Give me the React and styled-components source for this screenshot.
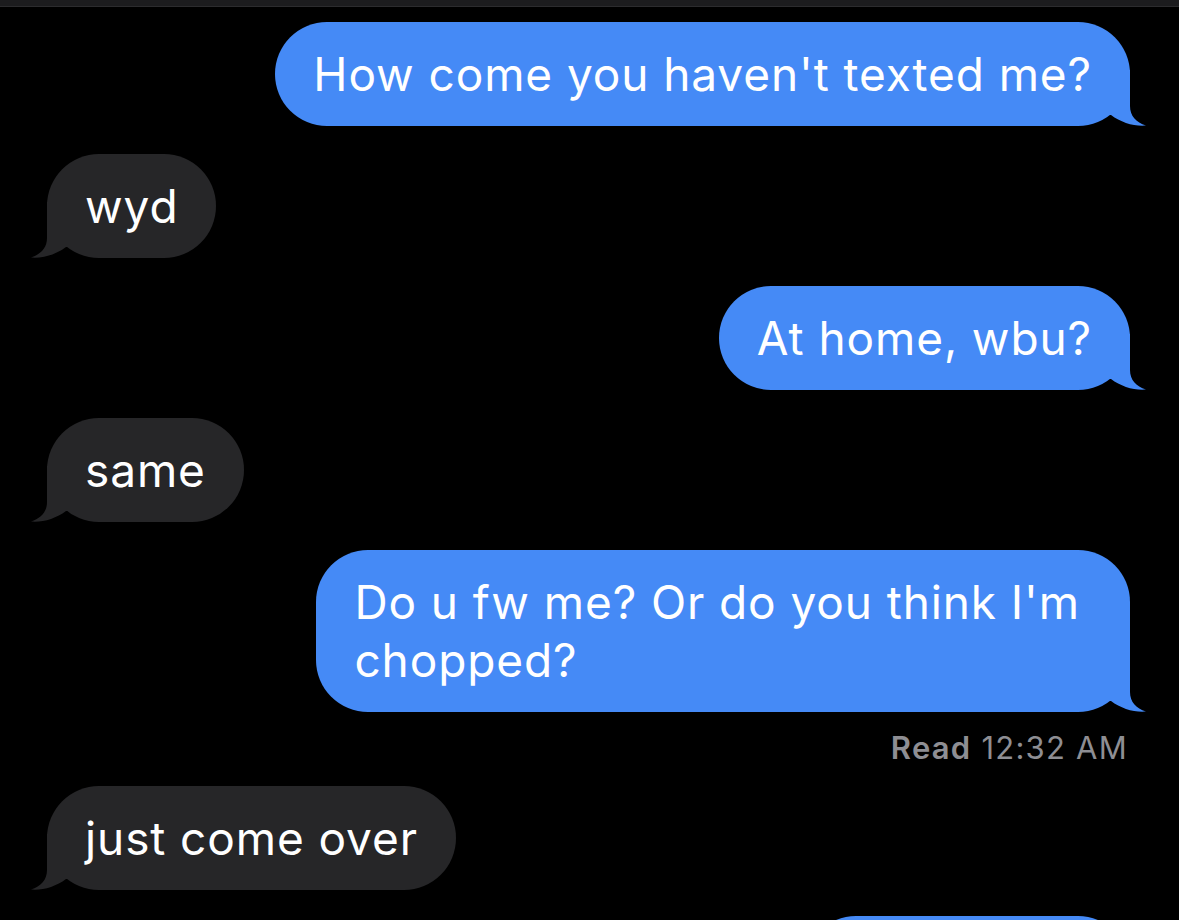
import styled, { createGlobalStyle } from 'styled-components';

const GlobalStyle = createGlobalStyle`
  html, body {
    margin: 0;
    padding: 0;
    background: #000;
  }
  body {
    font-family: Inter, "Liberation Sans", sans-serif;
    height: 920px;
    overflow: hidden;
  }
`;

const Screen = styled.div`
  background: #000;
  min-height: 920px;
`;

const TopBar = styled.div`
  height: 6px;
  background: #1c1c1e;
  border-bottom: 1px solid #2c2c2e;
`;

const Thread = styled.div`
  display: flex;
  flex-direction: column;
  padding: 15px 49px 0 47px;
`;

const Row = styled.div`
  display: flex;
  justify-content: ${(p) => (p.$me ? 'flex-end' : 'flex-start')};
  margin-top: ${(p) => p.$gap}px;
`;

const Bubble = styled.div`
  position: relative;
  box-sizing: border-box;
  max-width: 880px;
  padding: 23px ${(p) => (p.$multi ? 50 : 38)}px 23px 38px;
  border-radius: 52px;
  background: ${(p) => (p.$me ? '#458af6' : '#262628')};
  color: #fff;
  font-size: 46px;
  line-height: 58px;
  letter-spacing: 0.9px;
`;

const Line = styled.span`
  position: relative;
  z-index: 1;
  display: block;
  white-space: nowrap;
`;

const Tail = styled.svg`
  position: absolute;
  bottom: 0;
  width: 60px;
  height: 56px;
  ${(p) => (p.$me ? 'right: -18px;' : 'left: -18px; transform: scaleX(-1);')}
`;

const Receipt = styled.div`
  align-self: flex-end;
  margin: 16px 2px 0 0;
  font-size: 31px;
  line-height: 40px;
  letter-spacing: 1.25px;
  color: #8e8e93;

  b {
    font-weight: 600;
  }
`;

const messages = [
  { me: true, lines: ["How come you haven't texted me?"] },
  { me: false, lines: ['wyd'] },
  { me: true, lines: ['At home, wbu?'] },
  { me: false, lines: ['same'] },
  { me: true, lines: ["Do u fw me? Or do you think I'm", 'chopped?'], read: '12:32 AM' },
  { me: false, lines: ['just come over'] },
  { me: true, lines: ['On my way'] },
];

const Message = ({ me, lines, gap }) => (
  <Row $me={me} $gap={gap}>
    <Bubble $me={me} $multi={lines.length > 1}>
      <Tail $me={me} viewBox="0 0 60 56">
        <path
          d="M0 0 H42 V36 C42 46 48 52 58 55.6 C46 56.6 33 52.5 23 45 L0 45 Z"
          fill={me ? '#458af6' : '#262628'}
        />
      </Tail>
      {lines.map((l) => (
        <Line key={l}>{l}</Line>
      ))}
    </Bubble>
  </Row>
);

const App = () => {
  let afterReceipt = false;
  return (
    <Screen>
      <GlobalStyle />
      <TopBar />
      <Thread>
        {messages.map((m, i) => {
          const gap = i === 0 ? 0 : afterReceipt ? 18 : i === messages.length - 1 ? 26 : 28;
          afterReceipt = !!m.read;
          return (
            <div key={i} style={{ display: 'contents' }}>
              <Message me={m.me} lines={m.lines} gap={gap} />
              {m.read && (
                <Receipt>
                  <b>Read</b> {m.read}
                </Receipt>
              )}
            </div>
          );
        })}
      </Thread>
    </Screen>
  );
};

export default App;
